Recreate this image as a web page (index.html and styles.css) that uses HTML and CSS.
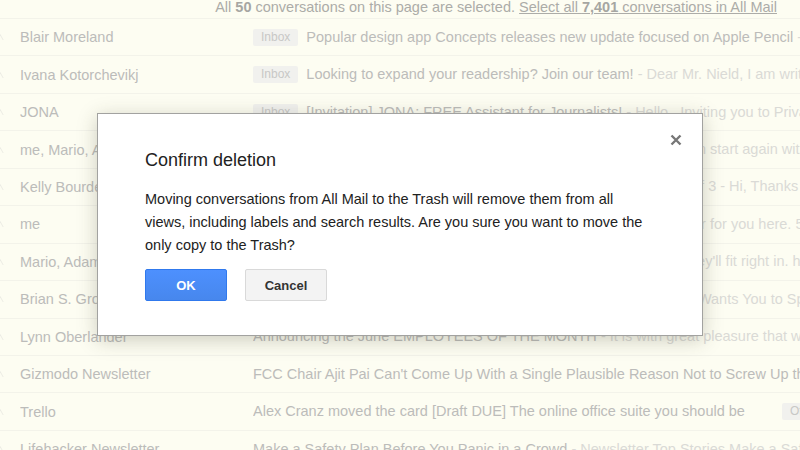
FILE: index.html
```html
<!DOCTYPE html>
<html>
<head>
<meta charset="utf-8">
<link rel="stylesheet" href="styles.css">
</head>
<body>
<div class="page">
  <div class="topbar">All <b>50</b> conversations on this page are selected. <span class="link">Select all <b>7,401</b> conversations in All Mail</span></div>
  <div class="list">
    <div class="row"><span class="mark"></span><span class="sender">Blair Moreland</span><span class="subj"><span class="badge">Inbox</span>Popular design app Concepts releases new update focused on Apple Pencil <span class="snip">- Concepts, the popular design app</span></span></div>
    <div class="row"><span class="mark"></span><span class="sender">Ivana Kotorchevikj</span><span class="subj"><span class="badge">Inbox</span>Looking to expand your readership? Join our team! <span class="snip">- Dear Mr. Nield, I am writing to you</span></span></div>
    <div class="row"><span class="mark"></span><span class="sender">JONA</span><span class="subj"><span class="badge">Inbox</span>[Invitation] JONA: FREE Assistant for Journalists! <span class="snip">- Hello , Inviting you to Private beta</span></span></div>
    <div class="row"><span class="mark"></span><span class="sender">me, Mario, Alex (3)</span><span class="subj">Re: Weekend post - I think it's a bit rough, so maybe tomorrow, we ca<span class="snip">n start again with a new angle</span></span></div>
    <div class="row"><span class="mark"></span><span class="sender">Kelly Bourdet</span><span class="subj">Re: Your Amazon.com order has shipped (#114-22388) - Package 1 o<span class="snip">f 3 - Hi, Thanks for shopping</span></span></div>
    <div class="row"><span class="mark"></span><span class="sender">me</span><span class="subj">Draft: Summer camera guide - Dropped in the edits, and left them ove<span class="snip">r for you here. 5 more to go</span></span></div>
    <div class="row"><span class="mark"></span><span class="sender">Mario, Adam (2)</span><span class="subj">New hires - Meet the two new writers joining next week, and I think th<span class="snip">ey'll fit right in. hope so</span></span></div>
    <div class="row"><span class="mark"></span><span class="sender">Brian S. Gross</span><span class="subj">Press release: New Galaxy phones, coming later this fall. - Samsung <span class="snip">Wants You to Spend</span></span></div>
    <div class="row"><span class="mark"></span><span class="sender">Lynn Oberlander</span><span class="subj">Announcing the June EMPLOYEES OF THE MONTH <span class="snip">- It is with great pleasure that we</span></span></div>
    <div class="row"><span class="mark"></span><span class="sender">Gizmodo Newsletter</span><span class="subj">FCC Chair Ajit Pai Can't Come Up With a Single Plausible Reason Not to Screw Up the Internet</span></div>
    <div class="row"><span class="mark"></span><span class="sender">Trello</span><span class="subj">Alex Cranz moved the card [Draft DUE] The online office suite you should be<span class="badge badge-r">Other</span></span></div>
    <div class="row"><span class="mark"></span><span class="sender">Lifehacker Newsletter</span><span class="subj">Make a Safety Plan Before You Panic in a Crowd <span class="snip">- Newsletter Top Stories Make a Safety</span></span></div>
  </div>

  <div class="dialog">
    <div class="close"><svg width="12" height="12" viewBox="0 0 12 12"><path d="M1.5 1.5 L10.5 10.5 M10.5 1.5 L1.5 10.5" stroke="#777" stroke-width="2.4" fill="none"/></svg></div>
    <div class="title">Confirm deletion</div>
    <div class="body">Moving conversations from All Mail to the Trash will remove them from all views, including labels and search results. Are you sure you want to move the only copy to the Trash?</div>
    <div class="buttons">
      <button class="btn ok">OK</button>
      <button class="btn cancel">Cancel</button>
    </div>
  </div>
</div>
</body>
</html>
```

FILE: styles.css
```css
html, body {
  margin: 0;
  padding: 0;
}
body {
  width: 800px;
  height: 450px;
  overflow: hidden;
  background: #fdfdf2;
  font-family: "Liberation Sans", Arial, sans-serif;
}
.page {
  position: relative;
  width: 800px;
  height: 450px;
  overflow: hidden;
}
.topbar {
  height: 18px;
  font-size: 14.5px;
  line-height: 14px;
  color: #acaca8;
  text-align: right;
  padding-right: 23px;
  white-space: nowrap;
}
.topbar b { color: #a6a6a2; }
.link { text-decoration: underline; }
.list {
  display: flex;
  flex-direction: column;
}
.row {
  box-sizing: border-box;
  height: 37.45px;
  flex: none;
  border-top: 1px solid #f3f3ea;
  display: grid;
  grid-template-columns: 20px 233px 1fr;
  align-items: center;
  white-space: nowrap;
  overflow: hidden;
  font-size: 14.5px;
  color: #bcbcba;
}
.mark {
  display: block;
  width: 4px;
  height: 6px;
  border-left: 1px solid #ececE4;
  transform: skewX(30deg);
  margin-left: 1px;
}
.sender { overflow: hidden; }
.subj {
  display: block;
  overflow: hidden;
  line-height: 17px;
}
.snip { color: #dadad6; }
.badge {
  display: inline-block;
  vertical-align: top;
  background: #f1f1ee;
  color: #c8c8c6;
  font-size: 12px;
  line-height: 17px;
  padding: 0 8px;
  margin-right: 8px;
  border-radius: 2px;
}
.badge-r { margin-left: 37px; margin-right: 0; }

.dialog {
  position: absolute;
  left: 97px;
  top: 113px;
  width: 606px;
  height: 223px;
  box-sizing: border-box;
  background: #fff;
  border: 1px solid #a2a2a0;
  box-shadow: 0 4px 18px rgba(60, 60, 40, 0.25);
  padding: 36px 47px 0 47px;
  color: #222;
}
.close {
  position: absolute;
  right: 20px;
  top: 20px;
  width: 12px;
  height: 12px;
  display: flex;
}
.title {
  font-size: 18px;
  line-height: 20px;
  color: #222;
}
.body {
  margin-top: 18px;
  font-size: 14.5px;
  line-height: 23px;
  color: #222;
}
.buttons {
  margin-top: 12px;
  display: flex;
  gap: 18px;
}
.btn {
  width: 82px;
  height: 32px;
  box-sizing: border-box;
  border-radius: 2px;
  font-family: "Liberation Sans", Arial, sans-serif;
  font-weight: bold;
  font-size: 13px;
  padding: 0;
}
.ok {
  background: linear-gradient(#4d90fe, #4787ed);
  border: 1px solid #3079ed;
  color: #fff;
}
.cancel {
  background: #f3f3f3;
  border: 1px solid #d9d9d9;
  color: #333;
}
```
